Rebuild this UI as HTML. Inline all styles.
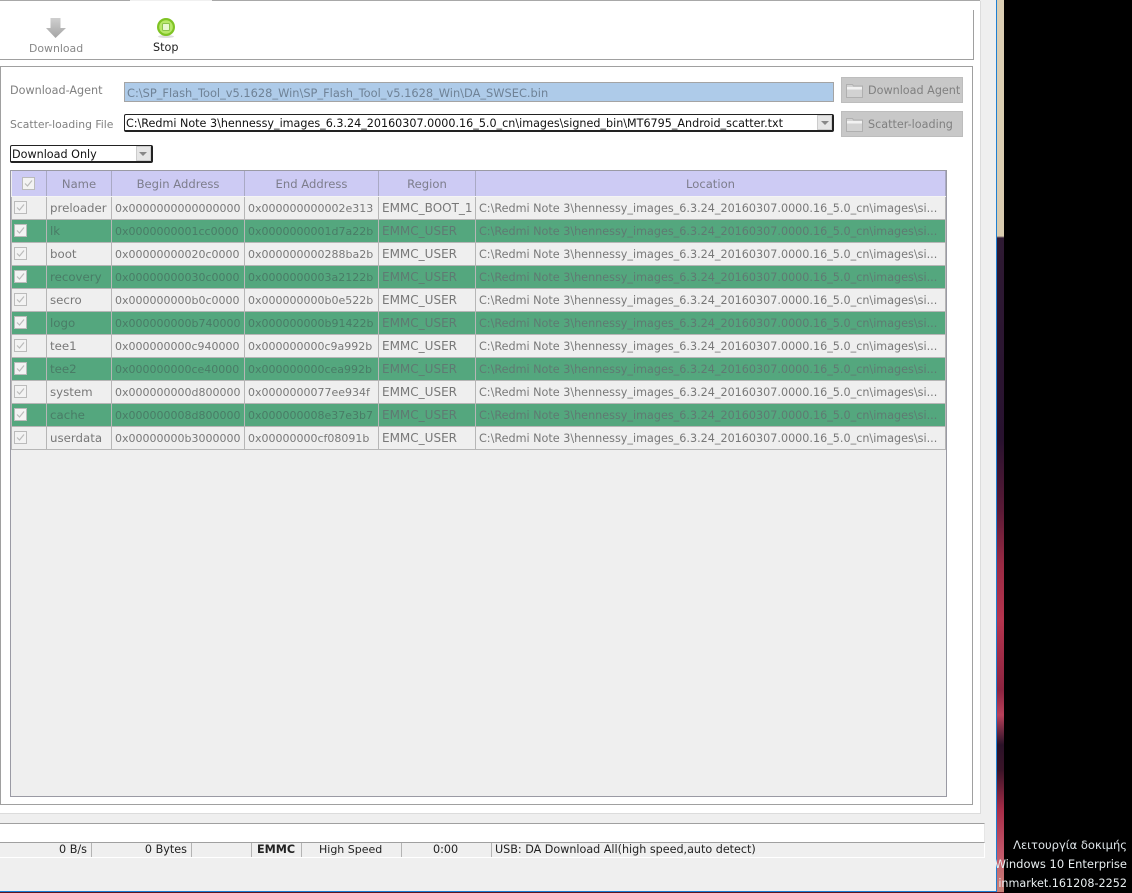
<!DOCTYPE html>
<html><head><meta charset="utf-8"><title>SP Flash Tool</title>
<style>
html,body{margin:0;padding:0;background:#000;width:1132px;height:893px;overflow:hidden}
body{position:relative;font-family:"DejaVu Sans","Liberation Sans",sans-serif;font-size:11.2px;color:#7b7b7b}
.a{position:absolute;box-sizing:border-box;white-space:nowrap}
table{position:absolute;left:11px;top:171px;border-collapse:collapse;table-layout:fixed;width:934px;font-size:11.2px}
td,th{padding:1px 0 0 3px;border:1px solid #b6b6b6;height:23px;box-sizing:border-box;overflow:hidden;white-space:nowrap;font-weight:normal;color:#787878}
th{background:#cdcbf4;height:25px;text-align:center;padding:1px 0 0 0;border-color:#a9a9c4;border-width:0 1px 1px 0;border-bottom:1px solid #f4f4f4;color:#7d7d8c;font-size:11.600px}
td:nth-child(2){font-size:11.800px}
td:nth-child(3),td:nth-child(4){font-size:11px}
td:nth-child(5){font-size:12px}
tr.g td{background:#54a77e;color:#497c66}
tr.g td:last-child,tr.g td:nth-child(5){color:#5f7a72}
tr.w td{background:#efefef}
td:first-child{padding:0 0 0 2px}
i.c{display:block;width:13px;height:13px;border:1px solid #bbb;background:#f3f3f3;box-sizing:border-box;position:relative}
i.c svg{position:absolute;left:0;top:0}
</style></head><body>
<!-- window bg -->
<div class="a" style="left:0;top:0;width:997px;height:893px;background:#efefef"></div>
<div class="a" style="left:996px;top:0;width:1px;height:892px;background:#1e7fd2"></div>
<div class="a" style="left:997px;top:0;width:7px;height:893px;background:linear-gradient(#dccfb4 0,#d9ccb0 236px,#2e1a33 238px,#28122f 440px,#5a1a36 510px,#9a2a44 565px,#b5344e 620px,#8c2440 690px,#b8405a 715px,#2a1228 745px,#3a1428 770px,#a82c48 810px,#c05468 850px,#c88078 890px)"></div>
<div class="a" style="left:0;top:891px;width:997px;height:1px;background:#1e7fd2"></div>
<div class="a" style="left:0;top:892px;width:1004px;height:1px;background:#5c1420"></div>

<!-- top white area -->
<div class="a" style="left:0;top:1px;width:981px;height:813px;background:#fff;border-right:1px solid #dcdcdc;border-bottom:1px solid #dcdcdc"></div>
<div class="a" style="left:0;top:0;width:980px;height:1px;background:#a8a8a8"></div>
<div class="a" style="left:130px;top:0;width:82px;height:1px;background:#f0f0f0"></div>

<!-- toolbar frame -->
<div class="a" style="left:973px;top:10px;width:1px;height:50px;background:#a0a0a0"></div>
<div class="a" style="left:0;top:59px;width:974px;height:1px;background:#a0a0a0"></div>
<svg class="a" style="left:44px;top:16px" width="24" height="24" viewBox="0 0 24 24"><defs><linearGradient id="d" x1="0" y1="0" x2="0" y2="1"><stop offset="0" stop-color="#cfcfcf"/><stop offset="1" stop-color="#a4a4a4"/></linearGradient></defs><path d="M6.500 2h10v10H22L11.500 22 2 12h4.500z" fill="url(#d)"/></svg>
<div class="a" style="left:29px;top:42px;color:#888;font-size:10.900px">Download</div>
<svg class="a" style="left:156px;top:17px" width="20" height="22" viewBox="0 0 20 22"><ellipse cx="10" cy="19.500" rx="8" ry="1.500" fill="#ddd"/><circle cx="10" cy="10" r="9" fill="#7fc324"/><circle cx="10" cy="10" r="6.800" fill="#b8e86a"/><rect x="6.500" y="6.500" width="7" height="7" rx="1" fill="#e8f8d0" stroke="#8bc34a"/></svg>
<div class="a" style="left:153px;top:41px;color:#222;font-size:11.200px">Stop</div>

<!-- group frame -->
<div class="a" style="left:0;top:66px;width:973px;height:739px;border:1px solid #a0a0a0"></div>

<div class="a" style="left:10px;top:84px;color:#808080">Download-Agent</div>
<div class="a" style="left:124px;top:82px;width:710px;height:20px;background:#aecbe9;border:1px solid #a4a4a4;color:#6f8296;padding:3px 0 0 2px;font-size:11.400px">C:\SP_Flash_Tool_v5.1628_Win\SP_Flash_Tool_v5.1628_Win\DA_SWSEC.bin</div>

<div class="a" style="left:10px;top:118px;color:#808080;font-size:10.800px">Scatter-loading File</div>
<div class="a" style="left:124px;top:114px;width:710px;height:18px;background:#fff;border:1px solid #222;border-radius:2px;border-right-width:2px;border-bottom-width:2px;color:#111;padding:2px 0 0 1px;font-size:11.170px">C:\Redmi Note 3\hennessy_images_6.3.24_20160307.0000.16_5.0_cn\images\signed_bin\MT6795_Android_scatter.txt</div>
<div class="a" style="left:817px;top:115px;width:15px;height:15px;background:#e6e6e6;border:1px solid #ccc"></div>
<div class="a" style="left:821px;top:121px;width:0;height:0;border:4px solid transparent;border-top:4px solid #888;border-bottom:0"></div>

<div class="a" style="left:10px;top:145px;width:143px;height:18px;background:#fff;border:1px solid #222;border-radius:2px;border-right-width:2px;border-bottom-width:2px;color:#111;padding:2px 0 0 1px">Download Only</div>
<div class="a" style="left:136px;top:146px;width:15px;height:15px;background:#e6e6e6;border:1px solid #ccc"></div>
<div class="a" style="left:139px;top:152px;width:0;height:0;border:4px solid transparent;border-top:4px solid #888;border-bottom:0"></div>

<!-- buttons -->
<div class="a" style="left:841px;top:77px;width:122px;height:26px;background:#c8c8c8;border:1px solid #bdbdbd;color:#808080;padding:6px 0 0 26px">Download Agent</div>
<div class="a" style="left:841px;top:111px;width:122px;height:26px;background:#c8c8c8;border:1px solid #bdbdbd;color:#808080;padding:6px 0 0 26px">Scatter-loading</div>
<svg class="a" style="left:846px;top:83px" width="17" height="15" viewBox="0 0 17 15"><path d="M.5 14.500V1.500h6l1 1.500h9v11.500z" fill="#d2d2d2" stroke="#b0b0b0"/><rect x="1" y="4" width="15" height="2.500" fill="#f2f2f2"/></svg>
<svg class="a" style="left:846px;top:117px" width="17" height="15" viewBox="0 0 17 15"><path d="M.5 14.500V1.500h6l1 1.500h9v11.500z" fill="#d2d2d2" stroke="#b0b0b0"/><rect x="1" y="4" width="15" height="2.500" fill="#f2f2f2"/></svg>

<!-- table bg -->
<div class="a" style="left:10px;top:170px;width:937px;height:627px;background:#efefef;border:1px solid #9a9aa4"></div>
<table>
<colgroup><col style="width:35px"><col style="width:65px"><col style="width:133px"><col style="width:134px"><col style="width:97px"><col style="width:470px"></colgroup>
<tr><th><i class="c" style="margin:0 auto"><svg width="11" height="11"><path d="M2 5.500l2.500 2.500L9 2.500" fill="none" stroke="#bbb" stroke-width="1.200"/></svg></i></th><th>Name</th><th>Begin Address</th><th>End Address</th><th>Region</th><th>Location</th></tr>
<tr class="w"><td><i class="c"><svg width="11" height="11"><path d="M2 5.500l2.500 2.500L9 2.500" fill="none" stroke="#bbb" stroke-width="1.200"/></svg></i></td><td>preloader</td><td>0x0000000000000000</td><td>0x000000000002e313</td><td>EMMC_BOOT_1</td><td>C:\Redmi Note 3\hennessy_images_6.3.24_20160307.0000.16_5.0_cn\images\si...</td></tr>
<tr class="g"><td><i class="c"><svg width="11" height="11"><path d="M2 5.500l2.500 2.500L9 2.500" fill="none" stroke="#bbb" stroke-width="1.200"/></svg></i></td><td>lk</td><td>0x0000000001cc0000</td><td>0x0000000001d7a22b</td><td>EMMC_USER</td><td>C:\Redmi Note 3\hennessy_images_6.3.24_20160307.0000.16_5.0_cn\images\si...</td></tr>
<tr class="w"><td><i class="c"><svg width="11" height="11"><path d="M2 5.500l2.500 2.500L9 2.500" fill="none" stroke="#bbb" stroke-width="1.200"/></svg></i></td><td>boot</td><td>0x00000000020c0000</td><td>0x000000000288ba2b</td><td>EMMC_USER</td><td>C:\Redmi Note 3\hennessy_images_6.3.24_20160307.0000.16_5.0_cn\images\si...</td></tr>
<tr class="g"><td><i class="c"><svg width="11" height="11"><path d="M2 5.500l2.500 2.500L9 2.500" fill="none" stroke="#bbb" stroke-width="1.200"/></svg></i></td><td>recovery</td><td>0x00000000030c0000</td><td>0x0000000003a2122b</td><td>EMMC_USER</td><td>C:\Redmi Note 3\hennessy_images_6.3.24_20160307.0000.16_5.0_cn\images\si...</td></tr>
<tr class="w"><td><i class="c"><svg width="11" height="11"><path d="M2 5.500l2.500 2.500L9 2.500" fill="none" stroke="#bbb" stroke-width="1.200"/></svg></i></td><td>secro</td><td>0x000000000b0c0000</td><td>0x000000000b0e522b</td><td>EMMC_USER</td><td>C:\Redmi Note 3\hennessy_images_6.3.24_20160307.0000.16_5.0_cn\images\si...</td></tr>
<tr class="g"><td><i class="c"><svg width="11" height="11"><path d="M2 5.500l2.500 2.500L9 2.500" fill="none" stroke="#bbb" stroke-width="1.200"/></svg></i></td><td>logo</td><td>0x000000000b740000</td><td>0x000000000b91422b</td><td>EMMC_USER</td><td>C:\Redmi Note 3\hennessy_images_6.3.24_20160307.0000.16_5.0_cn\images\si...</td></tr>
<tr class="w"><td><i class="c"><svg width="11" height="11"><path d="M2 5.500l2.500 2.500L9 2.500" fill="none" stroke="#bbb" stroke-width="1.200"/></svg></i></td><td>tee1</td><td>0x000000000c940000</td><td>0x000000000c9a992b</td><td>EMMC_USER</td><td>C:\Redmi Note 3\hennessy_images_6.3.24_20160307.0000.16_5.0_cn\images\si...</td></tr>
<tr class="g"><td><i class="c"><svg width="11" height="11"><path d="M2 5.500l2.500 2.500L9 2.500" fill="none" stroke="#bbb" stroke-width="1.200"/></svg></i></td><td>tee2</td><td>0x000000000ce40000</td><td>0x000000000cea992b</td><td>EMMC_USER</td><td>C:\Redmi Note 3\hennessy_images_6.3.24_20160307.0000.16_5.0_cn\images\si...</td></tr>
<tr class="w"><td><i class="c"><svg width="11" height="11"><path d="M2 5.500l2.500 2.500L9 2.500" fill="none" stroke="#bbb" stroke-width="1.200"/></svg></i></td><td>system</td><td>0x000000000d800000</td><td>0x0000000077ee934f</td><td>EMMC_USER</td><td>C:\Redmi Note 3\hennessy_images_6.3.24_20160307.0000.16_5.0_cn\images\si...</td></tr>
<tr class="g"><td><i class="c"><svg width="11" height="11"><path d="M2 5.500l2.500 2.500L9 2.500" fill="none" stroke="#bbb" stroke-width="1.200"/></svg></i></td><td>cache</td><td>0x000000008d800000</td><td>0x000000008e37e3b7</td><td>EMMC_USER</td><td>C:\Redmi Note 3\hennessy_images_6.3.24_20160307.0000.16_5.0_cn\images\si...</td></tr>
<tr class="w"><td><i class="c"><svg width="11" height="11"><path d="M2 5.500l2.500 2.500L9 2.500" fill="none" stroke="#bbb" stroke-width="1.200"/></svg></i></td><td>userdata</td><td>0x00000000b3000000</td><td>0x00000000cf08091b</td><td>EMMC_USER</td><td>C:\Redmi Note 3\hennessy_images_6.3.24_20160307.0000.16_5.0_cn\images\si...</td></tr>
</table>

<!-- status area -->
<div class="a" style="left:0;top:823px;width:985px;height:20px;background:#fff;border-top:1px solid #a0a0a0;border-bottom:1px solid #a0a0a0;border-right:1px solid #e6e6e6"></div>
<div class="a" style="left:0;top:843px;width:985px;height:15px;background:#efefef;border-bottom:1px solid #fff;border-right:1px solid #fff"></div>
<div class="a" style="left:91px;top:843px;width:1px;height:14px;background:#b4b4b4"></div>
<div class="a" style="left:191px;top:843px;width:1px;height:14px;background:#b4b4b4"></div>
<div class="a" style="left:251px;top:843px;width:1px;height:14px;background:#b4b4b4"></div>
<div class="a" style="left:301px;top:843px;width:1px;height:14px;background:#b4b4b4"></div>
<div class="a" style="left:401px;top:843px;width:1px;height:14px;background:#b4b4b4"></div>
<div class="a" style="left:491px;top:843px;width:1px;height:14px;background:#b4b4b4"></div>
<div class="a" style="right:1045px;top:843px;color:#222">0 B/s</div>
<div class="a" style="right:945px;top:843px;color:#222">0 Bytes</div>
<div class="a" style="left:257px;top:843px;color:#222;font-weight:bold">EMMC</div>
<div class="a" style="left:319px;top:843px;color:#222;font-size:11px">High Speed</div>
<div class="a" style="left:433px;top:843px;color:#222">0:00</div>
<div class="a" style="left:495px;top:843px;color:#222;font-size:11.170px">USB: DA Download All(high speed,auto detect)</div>

<!-- watermark -->
<div class="a" style="right:5px;top:838px;color:#dfe6ea;font-size:11.500px">Λειτουργία δοκιμής</div>
<div class="a" style="right:5px;top:857px;color:#e8eef0;font-size:11.500px">Windows 10 Enterprise</div>
<div class="a" style="right:5px;top:877px;color:#e8eef0;font-size:11.200px">inmarket.161208-2252</div>
</body></html>
